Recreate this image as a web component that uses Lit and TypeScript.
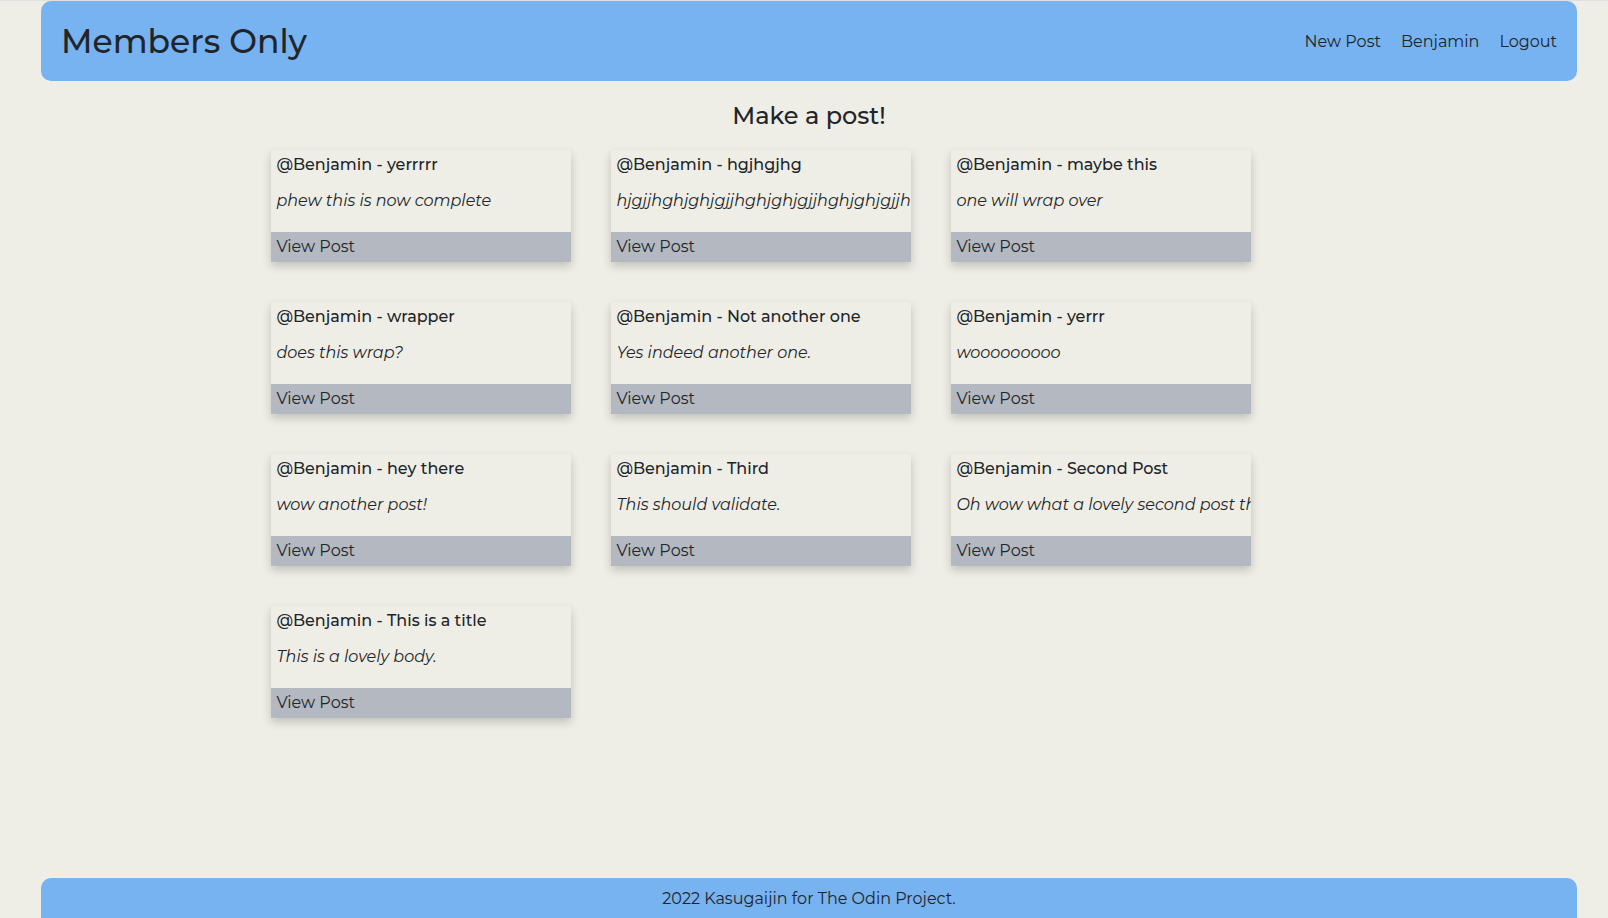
import { LitElement, html, css } from "lit";
import { customElement, property, state } from "lit/decorators.js";

interface Post {
  author: string;
  title: string;
  body: string;
}

@customElement("post-card")
export class PostCard extends LitElement {
  @property({ attribute: false }) post!: Post;

  static styles = css`
    :host {
      display: block;
      min-width: 0;
    }
    .card {
      display: flex;
      flex-direction: column;
      overflow: hidden;
      border-radius: 4px 4px 0 0;
      box-shadow: 0 4px 10px rgba(0, 0, 0, 0.2);
    }
    .title {
      margin: 0;
      padding: 2px 5px 0;
      font-size: 16px;
      font-weight: 500;
      line-height: 26px;
      white-space: nowrap;
    }
    .body {
      margin: 0;
      padding: 10px 0 18px 5px;
      font-size: 16px;
      font-style: italic;
      font-weight: 400;
      line-height: 26px;
      white-space: nowrap;
    }
    .view {
      padding: 0 5px;
      background: #b3b8c1;
      color: inherit;
      font-size: 16px;
      line-height: 30px;
      text-decoration: none;
    }
  `;

  render() {
    const { author, title, body } = this.post;
    return html`
      <article class="card">
        <h2 class="title">@${author} - ${title}</h2>
        <p class="body">${body}</p>
        <a class="view" href="#">View Post</a>
      </article>
    `;
  }
}

@customElement("app-root")
export class AppRoot extends LitElement {
  @state() private posts: Post[] = [
    { author: "Benjamin", title: "yerrrrr", body: "phew this is now complete" },
    { author: "Benjamin", title: "hgjhgjhg", body: "hjgjjhghjghjgjjhghjghjgjjhghjghjgjjh" },
    { author: "Benjamin", title: "maybe this", body: "one will wrap over" },
    { author: "Benjamin", title: "wrapper", body: "does this wrap?" },
    { author: "Benjamin", title: "Not another one", body: "Yes indeed another one." },
    { author: "Benjamin", title: "yerrr", body: "wooooooooo" },
    { author: "Benjamin", title: "hey there", body: "wow another post!" },
    { author: "Benjamin", title: "Third", body: "This should validate." },
    { author: "Benjamin", title: "Second Post", body: "Oh wow what a lovely second post this" },
    { author: "Benjamin", title: "This is a title", body: "This is a lovely body." },
  ];

  static styles = css`
    :host {
      display: flex;
      flex-direction: column;
      box-sizing: border-box;
      min-height: 100vh;
      padding: 0 31px 0 41px;
      border-top: 1px solid #e0e0e0;
      background: #efeee6;
      color: #212529;
      font-family: Montserrat, Inter, sans-serif;
      font-size: 16px;
    }
    .header {
      display: flex;
      align-items: center;
      justify-content: space-between;
      padding: 16px 20px;
      border-radius: 10px;
      background: #77b2f1;
    }
    .brand {
      margin: 0;
      font-size: 33px;
      font-weight: 500;
      line-height: 48px;
    }
    .nav {
      display: flex;
      gap: 20px;
      padding-top: 2px;
    }
    .link {
      color: inherit;
      line-height: 24px;
      text-decoration: none;
    }
    .main {
      flex: 1;
    }
    .prompt {
      margin: 18px 0;
      font-size: 24px;
      font-weight: 500;
      line-height: 33px;
      text-align: center;
    }
    .prompt .link {
      line-height: inherit;
    }
    .posts {
      display: grid;
      grid-template-columns: repeat(auto-fill, 300px);
      gap: 40px;
      width: 70%;
      margin: 0 auto 40px;
    }
    .footer {
      padding: 9px 0 7px;
      border-radius: 10px 10px 0 0;
      background: #77b2f1;
      line-height: 24px;
      text-align: center;
    }
  `;

  render() {
    return html`
      <header class="header">
        <h1 class="brand">Members Only</h1>
        <nav class="nav">
          <a class="link" href="#">New Post</a>
          <a class="link" href="#">Benjamin</a>
          <a class="link" href="#">Logout</a>
        </nav>
      </header>
      <main class="main">
        <h2 class="prompt"><a class="link" href="#">Make a post!</a></h2>
        <section class="posts">
          ${this.posts.map((post) => html`<post-card .post=${post}></post-card>`)}
        </section>
      </main>
      <footer class="footer">2022 Kasugaijin for The Odin Project.</footer>
    `;
  }
}
